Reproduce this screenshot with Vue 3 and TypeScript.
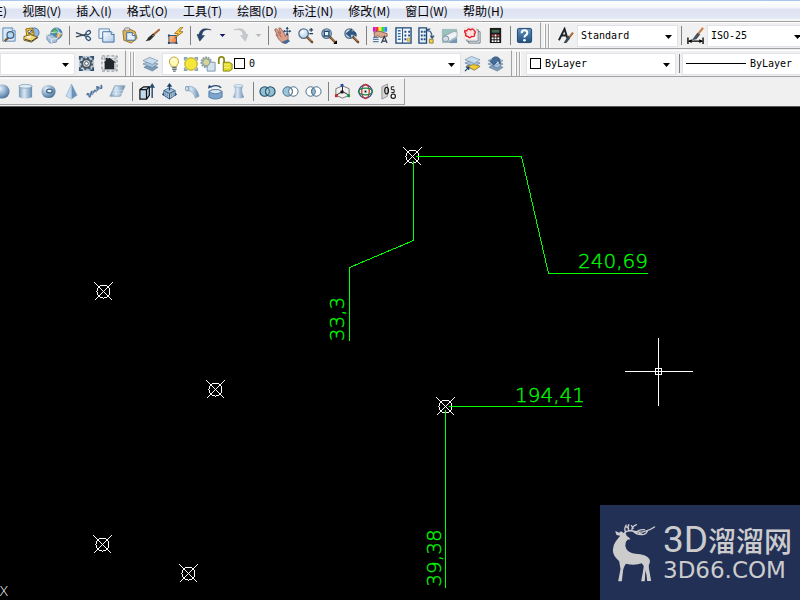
<script setup lang="ts">
interface Tool {
  id: string
  label: string
}
interface Point {
  x: number
  y: number
}

const menus: string[] = [
  '编辑(E)', '视图(V)', '插入(I)', '格式(O)', '工具(T)',
  '绘图(D)', '标注(N)', '修改(M)', '窗口(W)', '帮助(H)',
]

const tool = (id: string, label: string): Tool => ({ id, label })

const standardTools: Tool[][] = [
  [tool('preview', '打印预览'), tool('publish', '发布'), tool('globe', '三维 DWF')],
  [tool('cut', '剪切'), tool('copy', '复制'), tool('paste', '粘贴'), tool('brush', '特性匹配'), tool('block', '块编辑器')],
  [tool('undo', '放弃'), tool('undoMore', '放弃列表'), tool('redo', '重做'), tool('redoMore', '重做列表')],
  [tool('pan', '实时平移'), tool('zoom', '实时缩放'), tool('zoomWin', '窗口缩放'), tool('zoomPrev', '缩放上一个')],
  [tool('props', '特性'), tool('design', '设计中心'), tool('palette', '工具选项板'), tool('sheet', '图纸集'), tool('markup', '标记集'), tool('calc', '快速计算器')],
  [tool('help', '帮助')],
]

const solidTools: Tool[][] = [
  [tool('sphere', '球体'), tool('cylinder', '圆柱体'), tool('torus', '圆环体'), tool('pyramid', '棱锥面'), tool('helix', '螺旋'), tool('plane', '平面曲面')],
  [tool('extrude', '拉伸'), tool('pushpull', '按住并拖动'), tool('sweep', '扫掠'), tool('revolve', '旋转'), tool('loft', '放样')],
  [tool('union', '并集'), tool('subtract', '差集'), tool('intersect', '交集')],
  [tool('move3d', '三维移动'), tool('rotate3d', '三维旋转'), tool('align3d', '三维对齐')],
]

const lens = '<circle cx="7" cy="7" r="5" fill="url(#gLens)" stroke="#54718f" stroke-width="1.4"/><path d="M11 11l5 5" stroke="#6b4a2c" stroke-width="2.6" stroke-linecap="round"/><path d="M11.5 11l4 4" stroke="#d9a070" stroke-width="1"/>'
const sheets = '<path d="M2 13l6-3 9 3-6 4z" fill="#7f9db9" stroke="#4f6f91" stroke-width=".6"/><path d="M1 9.500l7-3.200 9 3.200-6 4z" fill="#a9c3dc" stroke="#4f6f91" stroke-width=".6"/><path d="M1 6l7-3.500L17 6l-6 4z" fill="#c9dcec" stroke="#5c7ea0" stroke-width=".6"/>'

const icons: Record<string, string> = {
  preview: '<path d="M3 1h10l3 3v11H3z" fill="#d8eafa" stroke="#5b86b5"/><path d="M13 1v3h3" fill="#fff" stroke="#5b86b5"/><path d="M5 15l4-4" stroke="#8a5a30" stroke-width="2.400"/><circle cx="11" cy="8.500" r="3.600" fill="#b8d8ef" stroke="#3d6187" stroke-width="1.300"/>',
  publish: '<circle cx="12" cy="6" r="5" fill="#8eb8df" stroke="#47749f"/><path d="M3 2l7-1 2 7-8 2z" fill="#f8ce3b" stroke="#8e6c10"/><path d="M5 4l4-1 1 3-4 1z" fill="#fff" stroke="#333" stroke-width=".7"/><path d="M6 7l4-4" stroke="#333"/><path d="M1 10l7-2 8 3-7 5-8-2z" fill="#f4d774" stroke="#6f5a23"/><path d="M2 13l7 2 6-4" fill="none" stroke="#333"/><path d="M4 10l4 1" stroke="#fff" stroke-width="1.500"/>',
  globe: '<circle cx="11" cy="7" r="6" fill="#3d86c6" stroke="#2a5f91" stroke-width=".7"/><path d="M8 2q5-1 4 3l-4 3q-3-1-2-4z" fill="#52aa62"/><path d="M12 6l5 1-3 5-3-2z" fill="#e5a63b"/><path d="M11 1q6 5 0 12M5 6q6-2 12 1" fill="none" stroke="#e9f3fb" stroke-width=".8"/><path d="M1 9l5-1 6 4-1 4-7 1-3-4z" fill="#a8c2db" stroke="#7894b1"/><path d="M1 9l5 4 6-1M6 13v4" fill="none" stroke="#e5eff8"/>',
  cut: '<path d="M1 6l11 4M1 10.500l11-3" stroke="#38495c" stroke-width="1.500"/><ellipse cx="14" cy="6" rx="2.600" ry="1.800" transform="rotate(-35 14 6)" fill="none" stroke="#33557c" stroke-width="1.400"/><ellipse cx="14" cy="12" rx="2.600" ry="1.800" transform="rotate(35 14 12)" fill="none" stroke="#33557c" stroke-width="1.400"/>',
  copy: '<path d="M1 2h11v10H1z" fill="#e9f3fc" stroke="#5c86b2"/><path d="M5 5h9l3 3v8H5z" fill="url(#gPaper)" stroke="#3f6c9c"/><path d="M14 5v3h3" fill="#fff" stroke="#3f6c9c"/>',
  paste: '<path d="M2 4l5-3 8 4 2 7-6 5-8-3z" fill="#dfb45c" stroke="#94712c"/><path d="M4 1h5v3H4z" fill="#d9d9d9" stroke="#777" stroke-width=".7"/><path d="M6 6h6l3 3v5H6z" fill="#e4f0fa" stroke="#3f6c9c"/><path d="M12 6v3h3" fill="#fff" stroke="#3f6c9c"/>',
  brush: '<path d="M16 3L9 9" stroke="#a7663a" stroke-width="2.200" stroke-linecap="round"/><path d="M9.500 7l2 2-5 5-5 1q2-2 3-4z" fill="#2b2b2b"/><path d="M9 8.500l1.500 1.500" stroke="#c9c9c9"/>',
  block: '<path d="M2 9h8v8H2z" fill="url(#gOrange)" stroke="#28527b"/><path d="M1 8h2v2H1zM9 16h2v2H9zM1 16h2v2H1z" fill="#1e4777"/><path d="M15 0L8 7h4l-4 5 9-7h-4l4-5z" fill="#ffd33d" stroke="#8b5a12" stroke-width=".8"/>',
  undo: '<path d="M16 3Q7 1 6 9l3 0-5 6-3-7h2Q5-1 16 3z" fill="#28466e" stroke="#1a3050" stroke-width=".5"/>',
  redo: '<path d="M2 3Q11 1 12 9l-3 0 5 6 3-7h-2Q13-1 2 3z" fill="#c4c8cb" stroke="#b3b7bb" stroke-width=".5"/>',
  undoMore: '<path d="M6 7.500h6l-3 3z" fill="#14146e"/>',
  redoMore: '<path d="M6 7.500h6l-3 3z" fill="#b9b9b9"/>',
  pan: '<path d="M1 2l2 0 4 5-2-6 2 0 4 6 1 3 1-3 2 1 0 4-1 5-5 0-4-4-3-5 2 1-3-5z" fill="#dba18d" stroke="#8a4c40" stroke-width=".7"/><path d="M4 5l4 6" stroke="#8a4c40" stroke-width=".7"/><path d="M8 16l7-3 2 2-5 3z" fill="#416a97"/><path d="M14 0v9M10 4.500h8" stroke="#25466b"/><path d="M14 0l-1.700 2h3.400zM14 9l-1.700-2h3.400zM9.700 4.500l2-1.700v3.400zM18 4.500l-2-1.700v3.400z" fill="#25466b"/>',
  zoom: lens + '<path d="M13 3h4M15 1v4M13 7h4" stroke="#1e3c60" stroke-width="1.200"/>',
  zoomWin: lens + '<path d="M4.500 4.500h5v5h-5z" fill="#e7f2fa" stroke="#1f456e" stroke-width="1.500"/><path d="M18 14v4h-4z" fill="#000"/>',
  zoomPrev: lens + '<path d="M14 10Q15 4 9 5V2L3 7l5 4V8q4-1 6 2z" fill="#2f5a88" stroke="#183859" stroke-width=".6"/>',
  props: '<path d="M1 0h3v5H1z" fill="#d81ad0"/><path d="M4 0h3v5H4z" fill="#f03434"/><path d="M7 0h3v5H7z" fill="#ffe92e"/><path d="M10 0h3v5h-3z" fill="#36d83f"/><path d="M13 0h3v5h-3z" fill="#2b8df0"/><path d="M2 6q4-3 8-1l6 2v3l-7 1-3-2-3 2z" fill="#dba891" stroke="#74473a" stroke-width=".8"/><path d="M1 11h6M1 13h6M1 15.500h6" stroke="#5c7ca2" stroke-width="1.300"/><path d="M10 17l3-7 3 7M11 15h4" fill="none" stroke="#26394f" stroke-width="1.200"/>',
  design: '<path d="M1 1h16v16H1z" fill="#f0f7fd" stroke="#1d4678" stroke-width="1.400"/><path d="M8 1v16" stroke="#1d4678"/><path d="M3 4h3M3 7h3M3 10h3M3 13h3" stroke="#356ca7" stroke-width="1.400"/><path d="M10 4h2v2h-2zM14 4h2v2h-2zM10 8h2v2h-2zM14 8h2v2h-2zM10 12h2v2h-2z" fill="#244e80"/><path d="M13 12h3v3h-3z" fill="#f4d352" stroke="#7f6818" stroke-width=".5"/>',
  palette: '<path d="M1 1h8v16H1z" fill="#eaf3fb" stroke="#1d4678" stroke-width="1.400"/><path d="M3 4h2v2H3zM6 4h2v2H6zM3 8h2v2H3zM6 8h2v2H6zM3 12h2v2H3zM6 12h2v2H6z" fill="#244e80"/><path d="M9 4q6-1 6 8M9 3l4-1M15 12l-2-3M15 12l2-3" fill="none" stroke="#31557d" stroke-width="1.300"/><path d="M12 13h4v4h-4z" fill="#f4d352" stroke="#7f6818" stroke-width=".8"/>',
  sheet: '<path d="M1 2h16v15H1z" fill="#a9c0cb"/><path d="M1 2h16v3L1 10z" fill="#9dbfbe"/><path d="M3 10L13 5l4 0v5L7 16z" fill="#eef2f5" stroke="#8998a5" stroke-width=".7"/><ellipse cx="5" cy="12.500" rx="3.300" ry="3" fill="#d3dce4" stroke="#7e909f"/><path d="M9 16l8-4v5H9z" fill="#7595b4"/>',
  markup: '<path d="M5 5h12v12H5z" fill="#fff" stroke="#61717e"/><path d="M3 3h12v12H3z" fill="#fff" stroke="#61717e"/><path d="M1 1h12v12H1z" fill="#fff" stroke="#e8b5b5" stroke-width=".5"/><path d="M3 4q1-3 4-1 3-2 4 1 2 2 0 3 1 4-3 3-2 3-4 0-3 0-2-3-2-2-1-3z" fill="#ffe0e0" stroke="#e0202a" stroke-width="1.500"/>',
  calc: '<path d="M3 1h12v16H3z" fill="#1b1b1b"/><path d="M5 3h8v3H5z" fill="#456b50"/><path d="M5 8h2v2H5zM11 8h2v2h-2z" fill="#e54545"/><path d="M8 8h2v2H8zM5 11h2v2H5zM8 11h2v2H8zM11 11h2v2h-2zM5 14h2v2H5zM8 14h2v2H8zM11 14h2v2h-2z" fill="#fff"/>',
  help: '<rect x="1.500" y="1.500" width="15" height="15" rx="1.500" fill="url(#gHelp)" stroke="#1d446f"/><path d="M6 6.500q0-3 3-3t3 2.700q0 1.800-1.800 2.600Q9 9.500 9 11" fill="none" stroke="#fff" stroke-width="2.200"/><circle cx="9" cy="14" r="1.400" fill="#fff"/>',
  textStyle: '<path d="M2 14L8 2l3 10M4 9h6" fill="none" stroke="#1e242c" stroke-width="2"/><path d="M17 6l-4 5" stroke="#ab6738" stroke-width="2.200"/><path d="M12 9l2 3-4 5-3 0z" fill="#3e4852"/>',
  dimStyle: '<path d="M17 1l-5 6" stroke="#cf7b3c" stroke-width="2.200"/><path d="M11 6l3 2-4 5-5 1z" fill="#49525b"/><path d="M1 11v7M17 11v7M2 15h14" stroke="#000" stroke-width="1.400"/><path d="M1 15l4-2v4zM17 15l-4-2v4z" fill="#000"/>',
  gear: '<path d="M1 1h16v16H1z" fill="#b9cbdb"/><path d="M1 1h4v2H3v2H1zM17 1h-4v2h2v2h2zM1 17h4v-2H3v-2H1zM17 17h-4v-2h2v-2h2z" fill="#34536f"/><circle cx="9" cy="9" r="4.500" fill="#dce4eb" stroke="#47525c" stroke-width="2"/><circle cx="9" cy="9" r="6" fill="none" stroke="#47525c" stroke-width="2" stroke-dasharray="2.200 2.500"/><circle cx="9" cy="9" r="2" fill="#fff" stroke="#47525c"/>',
  home: '<path d="M1 1h16v16H1z" fill="#eceff1" stroke="#77818a" stroke-dasharray="3 2"/><path d="M1 4h16M1 15h16M4 1v16M15 1v16" stroke="#929ba2" stroke-width=".7"/><path d="M3 8l2-2V3h2v1l2-1 7 5-2 0v7H4V8z" fill="#20262c"/>',
  layers: sheets,
  layerCurrent: '<g transform="translate(0 -1)">' + sheets + '</g><path d="M4 12l6-2 7 2-6 4z" fill="#f2ca35" stroke="#9f7e11" stroke-width=".7"/><path d="M1 17l4-4M2 13h3v3" fill="none" stroke="#163b6c" stroke-width="1.200"/>',
  layerPrev: sheets + '<path d="M14 10Q15 1 8 2Q5 3 5 6H3l4 5 4-4H9q0-2 2-1 2 1 3 4z" fill="#416b96" stroke="#24476b" stroke-width=".6"/>',
  bulb: '<path d="M6 12q0-2-2-4-1-6 5-7 6 1 5 7-2 2-2 4z" fill="#fff9b3" stroke="#b49d32"/><path d="M7 4q2-2 3 1" fill="none" stroke="#fff" stroke-width="1.500"/><path d="M7 13h5M7 15h5M8 17h3" stroke="#67717b" stroke-width="1.300"/>',
  sun: '<path d="M1 1h4v2H3v2H1zM17 1h-4v2h2v2h2zM1 17h4v-2H3v-2H1zM17 17h-4v-2h2v-2h2z" fill="#8ba3b8"/><circle cx="9" cy="9" r="7" fill="#f4e739" stroke="#a99615"/>',
  viewport: '<circle cx="7" cy="7" r="5.500" fill="#e3d98a" stroke="#809bb3" stroke-width="2" stroke-dasharray="2 1"/><path d="M8 7h9v10H8z" fill="#d5e2ec" stroke="#7190ac"/><circle cx="7" cy="7" r="4" fill="#d6d49a" stroke="#7991a4"/>',
  lock: '<path d="M2 9V4q0-3 3-3t3 3v4" fill="none" stroke="#8b8d13" stroke-width="2"/><path d="M7 7h7l3 2v6l-3 2H7z" fill="#e1db2d" stroke="#77770b"/><path d="M8 10h6M8 13h6" stroke="#fff68b"/>',
  sphere: '<circle cx="9" cy="9" r="7.500" fill="url(#gBall)"/>',
  cylinder: '<path d="M2 3v12q7 3 14 0V3z" fill="url(#gSide)"/><ellipse cx="9" cy="3.500" rx="7" ry="2" fill="#e0ebf5" stroke="#7093b5" stroke-width=".7"/>',
  torus: '<ellipse cx="9" cy="9" rx="7.500" ry="7" fill="url(#gBall)"/><ellipse cx="10" cy="8.500" rx="3" ry="2" fill="#edf4f9" stroke="#3e6388" stroke-width="1.300"/>',
  pyramid: '<path d="M9 1L3 14l6 3z" fill="#c4daee"/><path d="M9 1l6 12-6 4z" fill="#6b93b9"/><path d="M9 1L3 14l6 3 6-4z" fill="none" stroke="#7da2c5" stroke-width=".5"/>',
  helix: '<path d="M1 13q1-4 2 0t2-1 1-2 2 0 1-2 2 0 1-3 2 0 2-3" fill="none" stroke="#4e7195" stroke-width="1.600"/><path d="M3 15l1-4M7 13l0-5M11 10l0-5M14 7l1-4" stroke="#89a9c7" stroke-width="1.200"/>',
  plane: '<path d="M6 3h11l-5 11H1z" fill="url(#gSide)" stroke="#7e9ab5" stroke-width=".8"/><path d="M4 8h11M3 11h11" stroke="#d9e6f1" stroke-width=".7"/>',
  extrude: '<path d="M2 7l4-3h6v9l-3 4H2z" fill="#c1d9ec" stroke="#111" stroke-width="1.300"/><path d="M2 7h7v10M9 7l3-3" fill="none" stroke="#111" stroke-width="1.300"/><path d="M15 16V3" stroke="#234a73" stroke-width="1.500"/><path d="M15 0l-3 5h6z" fill="#234a73"/>',
  pushpull: '<path d="M3 8l6-3 6 3v5l-6 4-6-4z" fill="#a9c3db" stroke="#466d94"/><path d="M3 8l6 3 6-3M9 11v6" fill="none" stroke="#315678"/><path d="M5 10v5M7 11v5M11 11v5M13 10v4" stroke="#315678" stroke-width=".8" stroke-dasharray="1 1"/><path d="M9 8V2" stroke="#1f4267" stroke-width="1.400"/><path d="M9 0L6 4h6zM1 12l2-2v4zM17 12l-2-2v4z" fill="#1f4267"/>',
  sweep: '<path d="M2 4q11-3 14 10l-4 2Q10 8 3 8z" fill="url(#gSide)" stroke="#81a2bf" stroke-width=".7"/><ellipse cx="3" cy="6" rx="1.500" ry="2.400" fill="#e4edf5" stroke="#7798b5"/>',
  revolve: '<path d="M2 9l4-2h6l4 2v6q-7 4-14 0z" fill="#7ea6cd" stroke="#5980a5"/><path d="M2 9l4-2h6l4 2q-7 5-14 0" fill="#d6e6f3" stroke="#5980a5"/><path d="M15 5Q11 1 4 4" fill="none" stroke="#234c77" stroke-width="1.400"/><path d="M1 6l1-4 4 2z" fill="#234c77"/>',
  loft: '<path d="M4 3q3 5-1 12 6 3 12 0-4-7-1-12-5-2-10 0z" fill="url(#gSide)"/><ellipse cx="9" cy="3" rx="5" ry="1.500" fill="#dce9f3" stroke="#93afc7" stroke-width=".6"/>',
  union: '<circle cx="6" cy="9" r="5" fill="#91bfd3" stroke="#244b65" stroke-width="1.200"/><circle cx="12" cy="9" r="5" fill="#91bfd3" stroke="#244b65" stroke-width="1.200"/><path d="M9 5q-4 4 0 8 4-4 0-8z" fill="#b0d4e0" stroke="#244b65"/>',
  subtract: '<circle cx="12" cy="9" r="5" fill="#fff" stroke="#426783"/><circle cx="6" cy="9" r="5" fill="#9bc5d9" stroke="#426783"/><path d="M9 5q-4 4 0 8 4-4 0-8z" fill="#fff" stroke="#426783"/>',
  intersect: '<circle cx="6" cy="9" r="5" fill="#fff" stroke="#426783"/><circle cx="12" cy="9" r="5" fill="#fff" stroke="#426783"/><path d="M9 5q-4 4 0 8 4-4 0-8z" fill="#91bfd3" stroke="#426783"/>',
  move3d: '<path d="M9 3L2 6v7l7 3 7-3V6z" fill="none" stroke="#555" stroke-width=".8"/><path d="M9 9V3M9 9l-7 4M9 9l7 4" stroke="#222"/><path d="M7 1h3v3H7z" fill="#1d4fa5"/><path d="M1 12h3v3H1z" fill="#c52727"/><path d="M14 12h3v3h-3z" fill="#1d963c"/><path d="M7 8h3v3H7z" fill="#111"/>',
  rotate3d: '<circle cx="9" cy="9" r="7" fill="none" stroke="#283f94" stroke-width="1.300"/><ellipse cx="9" cy="9" rx="4" ry="7.500" fill="none" stroke="#d32929" stroke-width="1.300"/><ellipse cx="9" cy="9" rx="7.500" ry="3.500" fill="none" stroke="#248641" stroke-width="1.300"/><path d="M8 8h2v2H8z" fill="#111"/>',
  align3d: '<path d="M2 4l6-3v13l-6 3z" fill="#d3d3d3" stroke="#999"/><ellipse cx="7" cy="8" rx="2" ry="3.500" fill="none" stroke="#111" stroke-width="1.200"/><circle cx="14" cy="14" r="2.300" fill="#fff" stroke="#111" stroke-width="1.200"/><path d="M15 4h-3v3h3v3h-3" fill="none" stroke="#111"/>',
}

/* Drawing entities, in canvas units measured from the top left of the drawing area */
const points: Point[] = [
  { x: 103, y: 184 },
  { x: 215, y: 282 },
  { x: 102, y: 437 },
  { x: 188, y: 466 },
  { x: 412, y: 49 },
  { x: 445, y: 299 },
]
const leaders: string[] = [
  '415,49 521,49 548,166 647,166',
  '413,53 413,133 349,160 349,233',
  '448,299 581,299',
  '445,302 445,480',
]
const dimensions = [
  { text: '240,69', x: 613, y: 161, turned: false },
  { text: '194,41', x: 550, y: 295, turned: false },
  { text: '33,3', x: 344, y: 212, turned: true },
  { text: '39,38', x: 441, y: 451, turned: true },
]
</script>

<template>
  <div class="app">
    <svg class="defs" width="0" height="0" aria-hidden="true">
      <defs>
        <radialGradient id="gLens" cx=".35" cy=".3" r=".8"><stop offset="0" stop-color="#fff" /><stop offset="1" stop-color="#a5c8e3" /></radialGradient>
        <radialGradient id="gBall" cx=".35" cy=".3" r=".75"><stop offset="0" stop-color="#e3eef8" /><stop offset=".6" stop-color="#83a5c6" /><stop offset="1" stop-color="#496e94" /></radialGradient>
        <linearGradient id="gSide"><stop offset="0" stop-color="#7899b9" /><stop offset=".4" stop-color="#d9e7f3" /><stop offset="1" stop-color="#668bb0" /></linearGradient>
        <linearGradient id="gPaper" x2="1" y2="1"><stop offset="0" stop-color="#fff" /><stop offset="1" stop-color="#a9cae9" /></linearGradient>
        <linearGradient id="gOrange" x2="1" y2="1"><stop offset="0" stop-color="#ffc79d" /><stop offset="1" stop-color="#f07730" /></linearGradient>
        <linearGradient id="gHelp" x2="0" y2="1"><stop offset="0" stop-color="#5f93c1" /><stop offset="1" stop-color="#21507f" /></linearGradient>
      </defs>
    </svg>

    <nav class="menu" aria-label="菜单栏">
      <button v-for="m in menus" :key="m" type="button" class="menu-item">{{ m }}</button>
    </nav>

    <div class="bar">
      <div class="panel standard">
        <template v-for="(group, g) in standardTools" :key="g">
          <span v-if="g > 0" class="sep"></span>
          <button
            v-for="t in group" :key="t.id" type="button" class="tool"
            :class="{ more: t.id.endsWith('More') }" :aria-label="t.label"
          >
            <svg class="icon" viewBox="0 0 18 18" v-html="icons[t.id]"></svg>
          </button>
        </template>
      </div>
      <div class="panel last">
        <span class="grip"></span>
        <button type="button" class="tool" aria-label="文字样式">
          <svg class="icon" viewBox="0 0 18 18" v-html="icons.textStyle"></svg>
        </button>
        <div class="combo text-style">
          <select aria-label="文字样式名称"><option>Standard</option></select>
          <svg class="arrow" viewBox="0 0 7 4"><path d="M0 0h7L3.500 4z" /></svg>
        </div>
        <span class="sep"></span>
        <button type="button" class="tool" aria-label="标注样式">
          <svg class="icon" viewBox="0 0 18 18" v-html="icons.dimStyle"></svg>
        </button>
        <div class="combo grow">
          <select aria-label="标注样式名称"><option>ISO-25</option></select>
          <svg class="arrow" viewBox="0 0 7 4"><path d="M0 0h7L3.500 4z" /></svg>
        </div>
      </div>
    </div>

    <div class="bar">
      <div class="panel">
        <div class="combo workspace">
          <select aria-label="工作空间"><option></option></select>
          <svg class="arrow" viewBox="0 0 7 4"><path d="M0 0h7L3.500 4z" /></svg>
        </div>
        <button type="button" class="tool" aria-label="工作空间设置">
          <svg class="icon" viewBox="0 0 18 18" v-html="icons.gear"></svg>
        </button>
        <button type="button" class="tool" aria-label="我的工作空间">
          <svg class="icon" viewBox="0 0 18 18" v-html="icons.home"></svg>
        </button>
      </div>
      <div class="panel">
        <span class="grip"></span>
        <button type="button" class="tool" aria-label="图层特性管理器">
          <svg class="icon" viewBox="0 0 18 18" v-html="icons.layers"></svg>
        </button>
        <div class="combo layer">
          <svg v-for="s in ['bulb', 'sun', 'viewport', 'lock']" :key="s" class="state" viewBox="0 0 18 18" v-html="icons[s]"></svg>
          <span class="swatch"></span>
          <select aria-label="图层"><option>0</option></select>
          <svg class="arrow" viewBox="0 0 7 4"><path d="M0 0h7L3.500 4z" /></svg>
        </div>
        <button type="button" class="tool" aria-label="将对象的图层置为当前">
          <svg class="icon" viewBox="0 0 18 18" v-html="icons.layerCurrent"></svg>
        </button>
        <button type="button" class="tool" aria-label="上一个图层">
          <svg class="icon" viewBox="0 0 18 18" v-html="icons.layerPrev"></svg>
        </button>
      </div>
      <div class="panel last">
        <span class="grip"></span>
        <div class="combo color">
          <span class="swatch"></span>
          <select aria-label="颜色"><option>ByLayer</option></select>
          <svg class="arrow" viewBox="0 0 7 4"><path d="M0 0h7L3.500 4z" /></svg>
        </div>
        <span class="sep"></span>
        <div class="combo grow">
          <span class="line"></span>
          <select aria-label="线型"><option>ByLayer</option></select>
        </div>
      </div>
    </div>

    <div class="bar">
      <div class="panel solids">
        <template v-for="(group, g) in solidTools" :key="g">
          <span v-if="g > 0" class="sep"></span>
          <button v-for="t in group" :key="t.id" type="button" class="tool" :aria-label="t.label">
            <svg class="icon" viewBox="0 0 18 18" v-html="icons[t.id]"></svg>
          </button>
        </template>
      </div>
    </div>

    <main class="canvas">
      <svg class="drawing">
        <g transform="translate(.5 .5)">
          <g v-for="(p, i) in points" :key="i" class="point" :transform="`translate(${p.x} ${p.y})`">
            <circle r="6.500" />
            <path d="M-9-9L9 9M-9 9L9-9" />
          </g>
          <polyline v-for="l in leaders" :key="l" class="leader" :points="l" />
          <g class="cursor" transform="translate(658 264)">
            <path d="M-34 0H34M0-34V34M-3-3H3V3H-3z" />
          </g>
        </g>
        <text
          v-for="d in dimensions" :key="d.text" class="dimension"
          :transform="`translate(${d.x} ${d.y})${d.turned ? ' rotate(-90)' : ''}`"
        >{{ d.text }}</text>
        <text class="axis" x="-1" y="489">X</text>
      </svg>

      <aside class="brand">
        <svg class="deer" viewBox="36 68 134 180">
          <path
            d="M46 92l11 5 5-4 9 5 5 0 4 9 8 6 3 4-9 1-5 7q-4 12 2 22 8 12 27 13 32 2 41 15 5 8-1 19-1 8 2 20l5 28h-12l-2-19-7-25q-5-4-7-9-22 8-48 1-6 9-8 18l-4 35H54l7-37-4-23q-19-17-19-34 0-14 9-26l13-17-11-2-3-8z"
          />
          <path d="M132 190l7 7-4 21-1 25h-11l5-27z" />
          <path
            class="antler"
            d="M72 99q8-10 25-7 18 6 35 2 17-4 31-14M76 94q-5-9 2-20M86 90q-5-9 0-17M95 91q-1-12 14-18M99 93q13 13 32 9 8-2 11-10M109 96q7-10 24-8M118 99l10 4M84 83l-8-5M99 84l-5-8"
          />
        </svg>
        <div class="brand-text">
          <div class="brand-name"><span class="latin">3D</span><span>溜溜网</span></div>
          <div class="brand-site">3D66.COM</div>
        </div>
      </aside>
    </main>
  </div>
</template>

<style>
body {
  margin: 0;
  background: #000;
}
</style>

<style scoped>
.app {
  display: flex;
  flex-direction: column;
  height: 100vh;
  overflow: hidden;
  background: #f0f0f0;
  font-family: "Noto Sans CJK SC", sans-serif;
  color: #000;
}
.defs {
  position: absolute;
}
button,
select {
  margin: 0;
  padding: 0;
  border: 0;
  background: transparent;
  font: inherit;
  color: inherit;
}
.menu {
  display: flex;
  flex: none;
  height: 22px;
  box-sizing: border-box;
  margin-left: -39px;
  border-top: 1px solid #a9c8ee;
  border-bottom: 1px solid #a0a0a0;
  background: linear-gradient(#fff 0, #f3f6fc 7px, #dde3f2 8px, #e3e8f6 17px, #f8f8f8 19px);
}
.menu-item {
  flex: none;
  padding: 0 8px 0 7px;
  font-size: 12px;
  line-height: 18px;
  white-space: nowrap;
}
.bar {
  display: flex;
  flex: none;
  height: 28px;
}
.panel {
  display: flex;
  flex: none;
  align-items: center;
  box-sizing: border-box;
  height: 27px;
  padding-right: 4px;
  border-right: 1px solid #a0a0a0;
  border-bottom: 1px solid #a0a0a0;
  border-top: 1px solid #fff;
}
.panel.last {
  flex: 1;
  min-width: 0;
  margin-right: -12px;
}
.standard {
  margin-left: -3px;
}
.solids {
  margin-left: -9px;
}
.tool {
  display: flex;
  flex: none;
  align-items: center;
  justify-content: center;
  width: 23px;
  height: 24px;
}
.tool.more {
  width: 13px;
}
.icon {
  flex: none;
  width: 17px;
  height: 17px;
}
.sep {
  flex: none;
  width: 1px;
  height: 19px;
  margin: 0 2px 0 3px;
  background: #808080;
}
.grip {
  flex: none;
  width: 2px;
  height: 24px;
  margin: 0 5px 0 4px;
  border-left: 1px solid #a8a8a8;
  border-right: 1px solid #a8a8a8;
  box-shadow: 1px 0 #fff, -1px 0 #fff;
}
.combo {
  position: relative;
  display: flex;
  flex: none;
  align-items: center;
  box-sizing: border-box;
  height: 22px;
  padding-left: 3px;
  border: 1px solid #e2e3ea;
  background: #fff;
  font-family: "DejaVu Sans Mono", monospace;
  font-size: 10px;
}
.combo select {
  flex: 1;
  min-width: 0;
  height: 20px;
  appearance: none;
  outline: none;
}
.combo.grow {
  flex: 1;
  min-width: 0;
}
.arrow {
  position: absolute;
  right: 5px;
  top: 9px;
  width: 7px;
  height: 4px;
  pointer-events: none;
}
.workspace {
  width: 75px;
}
.text-style {
  width: 101px;
}
.layer {
  width: 299px;
}
.color {
  width: 150px;
  margin-left: 1px;
}
.state {
  flex: none;
  width: 16px;
  height: 16px;
  margin-right: 1px;
}
.swatch {
  flex: none;
  box-sizing: border-box;
  width: 11px;
  height: 11px;
  margin-right: 4px;
  border: 1px solid #000;
}
.line {
  flex: none;
  width: 60px;
  height: 1px;
  margin-right: 4px;
  background: #000;
}
.canvas {
  position: relative;
  flex: 1;
  min-height: 0;
  overflow: hidden;
  border-top: 1px solid #5a5a5a;
  background: #000;
}
.drawing {
  display: block;
  width: 100%;
  height: 100%;
}
.point {
  fill: none;
  stroke: #fff;
  shape-rendering: crispEdges;
}
.leader {
  fill: none;
  stroke: #0f0;
  shape-rendering: crispEdges;
}
.cursor {
  fill: none;
  stroke: #fff;
  shape-rendering: crispEdges;
}
.dimension {
  fill: #0f0;
  stroke: #0f0;
  stroke-width: .3px;
  font-family: "DejaVu Sans", sans-serif;
  font-size: 20px;
  font-weight: 200;
  text-anchor: middle;
}
.axis {
  fill: #fff;
  font-family: "DejaVu Sans", sans-serif;
  font-size: 14px;
  font-weight: 200;
}
.brand {
  position: absolute;
  right: 0;
  bottom: 0;
  display: flex;
  align-items: center;
  gap: 6px;
  box-sizing: border-box;
  width: 200px;
  height: 95px;
  padding-left: 12px;
  background: #223056;
  color: #ccc;
}
.deer {
  flex: none;
  width: 45px;
  height: 60px;
  fill: #ccc;
}
.antler {
  fill: none;
  stroke: #ccc;
  stroke-width: 4px;
  stroke-linecap: round;
}
.brand-text {
  white-space: nowrap;
}
.brand-name {
  display: flex;
  align-items: center;
  height: 34px;
  font-size: 28px;
  font-weight: 500;
  line-height: 34px;
}
.latin {
  font-family: Roboto, sans-serif;
  font-size: 37px;
  font-weight: 400;
}
.brand-site {
  font-family: "DejaVu Sans", sans-serif;
  font-size: 23px;
  line-height: 26px;
}
</style>
